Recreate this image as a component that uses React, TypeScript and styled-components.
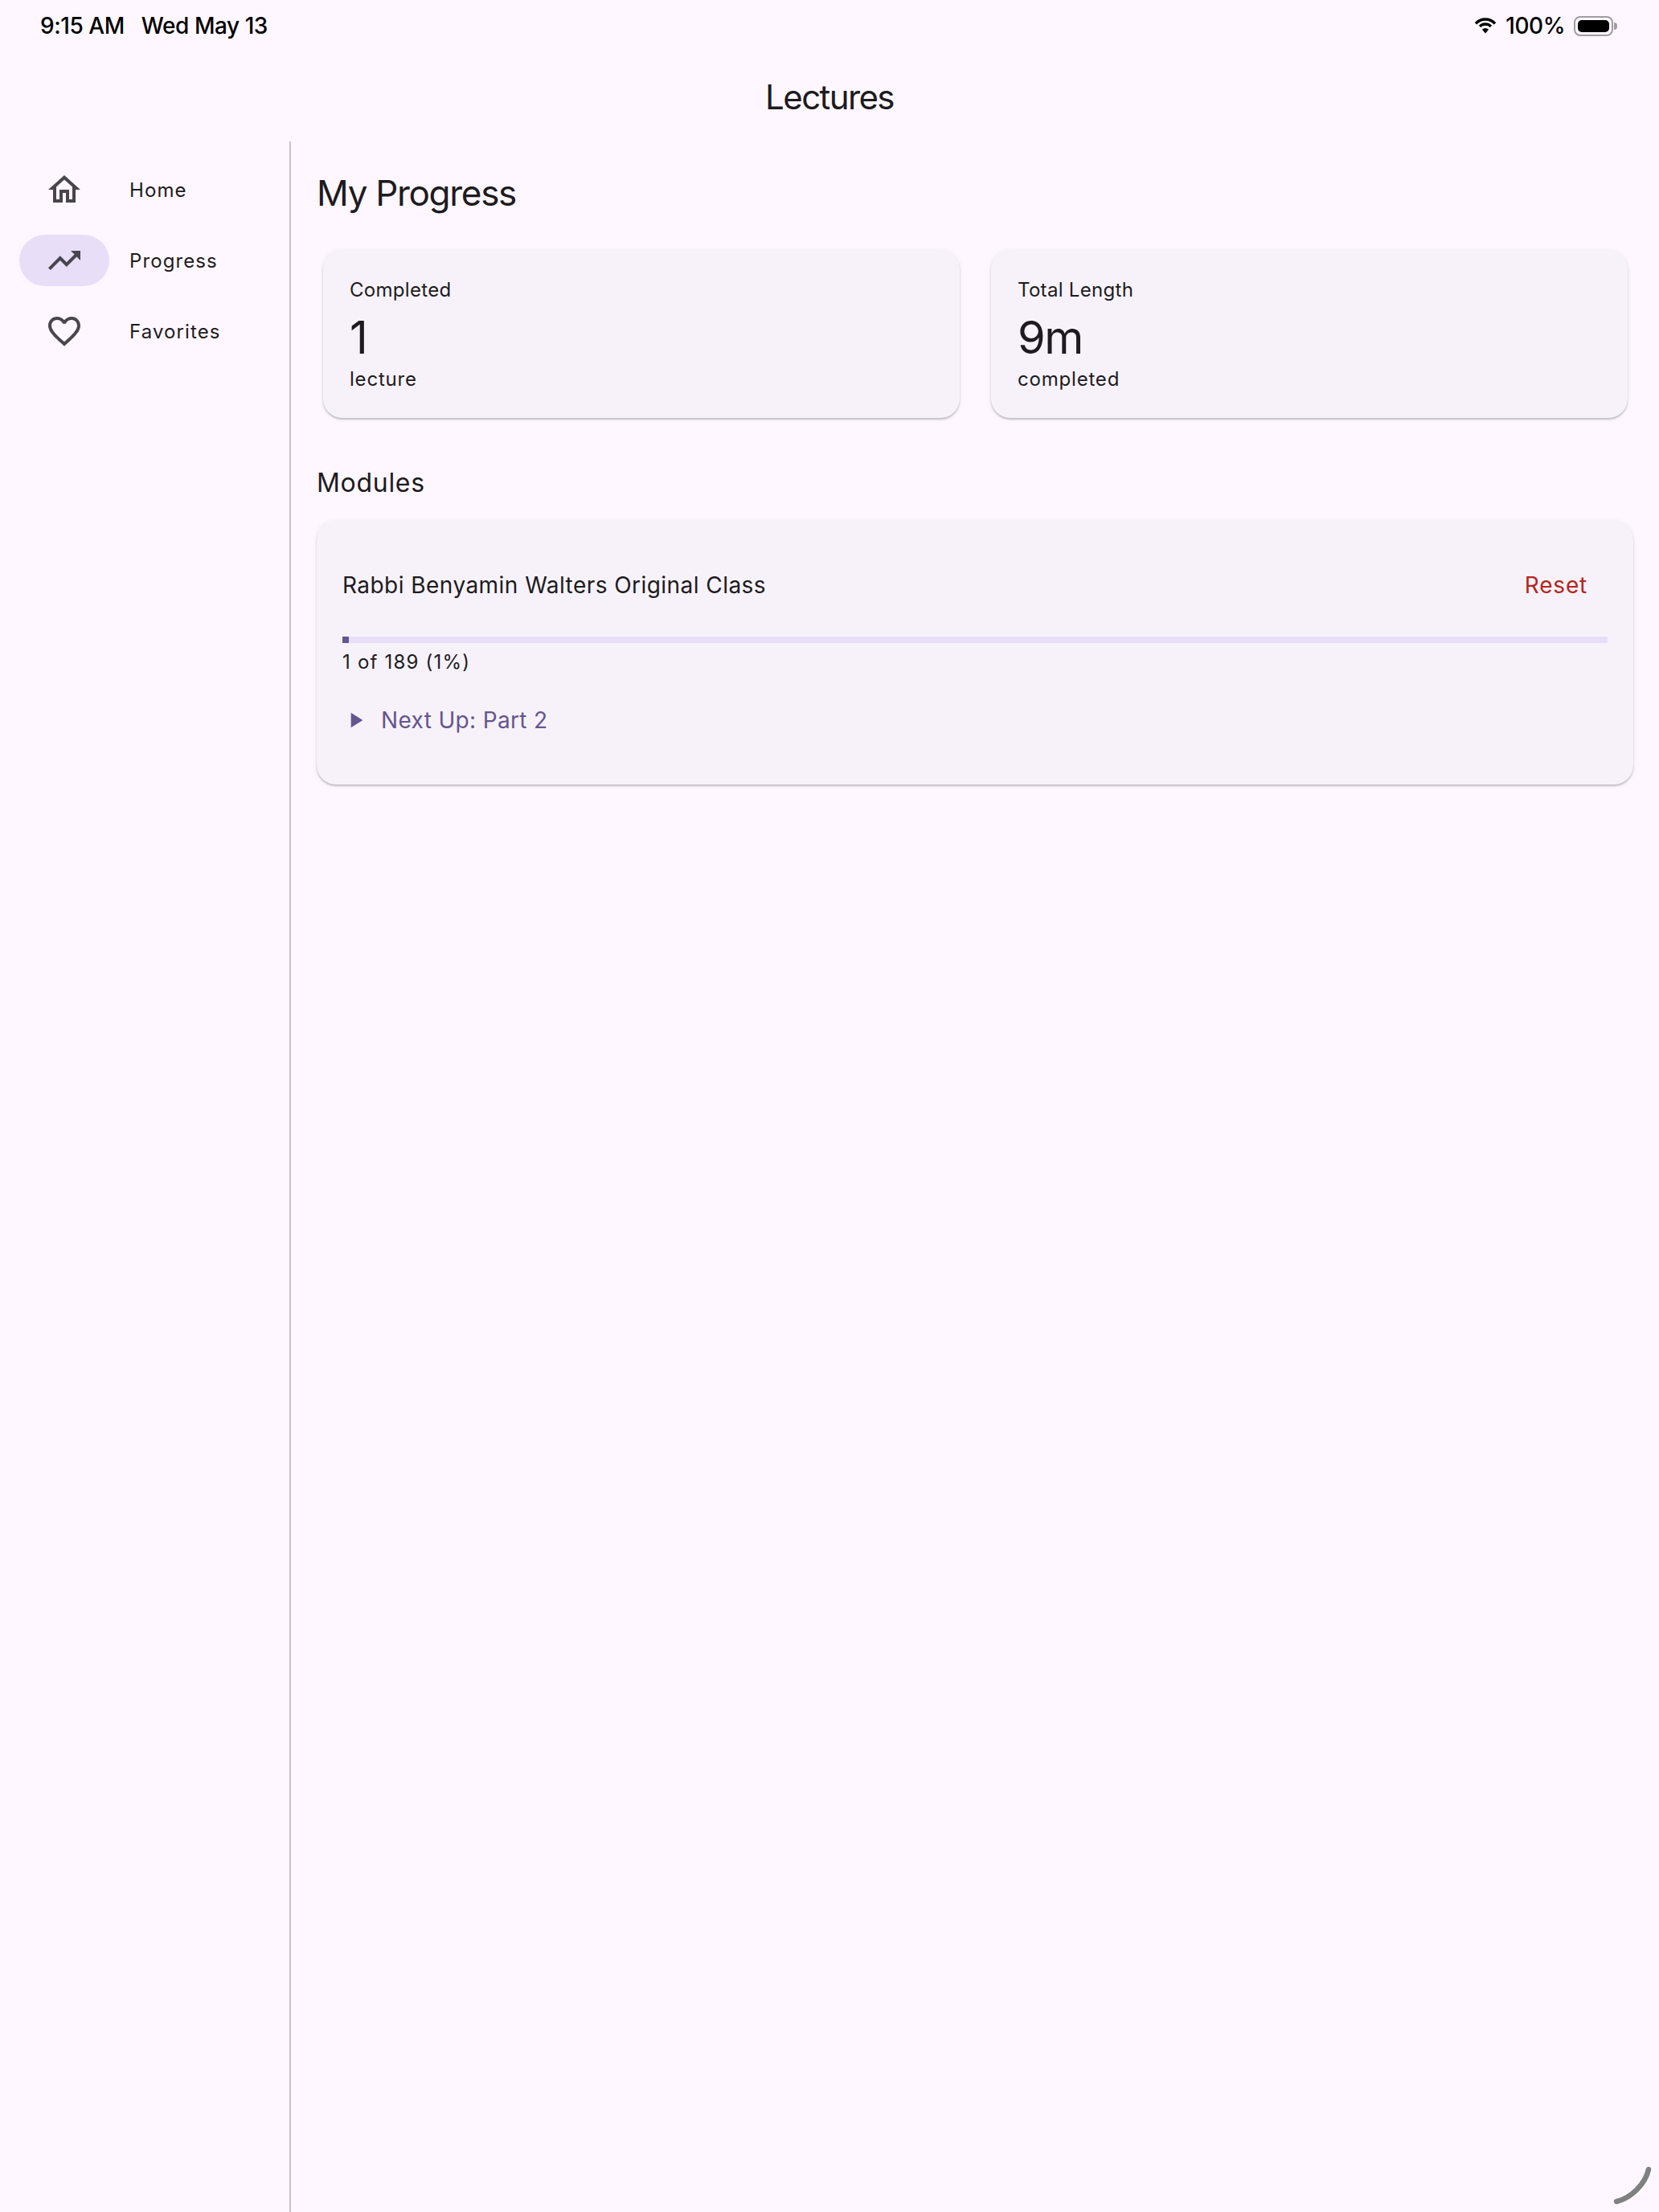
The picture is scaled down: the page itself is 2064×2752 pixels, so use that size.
import styled, { createGlobalStyle } from "styled-components";

const GlobalStyle = createGlobalStyle`
  html, body {
    margin: 0;
    padding: 0;
    background: #fef7ff;
  }
  * {
    box-sizing: border-box;
  }
`;

const Page = styled.div`
  width: 2064px;
  height: 2752px;
  display: flex;
  flex-direction: column;
  background: #fef7ff;
  color: #1d1b20;
  font-family: "Inter", "Liberation Sans", sans-serif;
  overflow: hidden;
`;

const StatusBar = styled.div`
  height: 64px;
  flex-shrink: 0;
  display: flex;
  align-items: center;
  justify-content: space-between;
  padding: 0 52px 0 50px;
  color: #000;
  font-size: 28px;
  font-weight: 500;
`;

const StatusGroup = styled.div<{ $gap: number }>`
  display: flex;
  align-items: center;
  gap: ${({ $gap }) => $gap}px;
`;

const StatusText = styled.span`
  letter-spacing: -0.45px;
  white-space: nowrap;
`;

const Battery = styled.div`
  position: relative;
  width: 49px;
  height: 25px;
  padding: 3px;
  border: 2px solid #a09ca2;
  border-radius: 8px;
  margin-right: 5px;

  &::before {
    content: "";
    display: block;
    height: 100%;
    background: #000;
    border-radius: 5px;
  }

  &::after {
    content: "";
    position: absolute;
    right: -7px;
    top: 6px;
    width: 4px;
    height: 9px;
    background: #a09ca2;
    border-radius: 0 4px 4px 0;
  }
`;

const TitleBar = styled.header`
  height: 112px;
  flex-shrink: 0;
  display: flex;
  align-items: center;
  justify-content: center;
  padding-top: 1px;
  font-size: 42px;
  font-weight: 400;
  letter-spacing: -1.6px;
`;

const Body = styled.div`
  flex: 1;
  display: flex;
  min-height: 0;
`;

const Sidebar = styled.nav`
  width: 362px;
  flex-shrink: 0;
  display: flex;
  flex-direction: column;
  padding-top: 16px;
  border-right: 2px solid #cac4d0;
`;

const NavRow = styled.div`
  height: 88px;
  display: flex;
  align-items: center;
  gap: 25px;
  padding-left: 24px;
`;

const NavIcon = styled.div<{ $active?: boolean }>`
  width: 112px;
  height: 64px;
  display: flex;
  align-items: center;
  justify-content: center;
  border-radius: 32px;
  background: ${({ $active }) => ($active ? "#e8def8" : "transparent")};
  color: #49454f;
`;

const NavLabel = styled.span`
  font-size: 24px;
  font-weight: 400;
  letter-spacing: 1.1px;
  color: #1d1b20;
`;

const Main = styled.main`
  flex: 1;
  min-width: 0;
  padding: 32px 32px 0;
`;

const Heading = styled.h1`
  margin: 0;
  font-size: 44px;
  line-height: 64px;
  font-weight: 400;
  letter-spacing: -1.3px;
`;

const StatGrid = styled.div`
  display: grid;
  grid-template-columns: 1fr 1fr;
  gap: 39px;
  padding: 0 7px 0 8px;
  margin-top: 39px;
`;

const Card = styled.section`
  background: #f7f2fa;
  border-radius: 24px;
  box-shadow: 0 2px 2px rgba(0, 0, 0, 0.2), 0 1px 6px rgba(0, 0, 0, 0.08);
`;

const StatCard = styled(Card)`
  height: 209px;
  padding: 34px 33px 0;
`;

const StatLabel = styled.div`
  font-size: 24px;
  line-height: 32px;
  font-weight: 400;
  letter-spacing: 0.3px;
`;

const StatValue = styled.div`
  margin-top: 7px;
  font-size: 56px;
  line-height: 72px;
  font-weight: 400;
  letter-spacing: -1.4px;
`;

const StatUnit = styled.div`
  font-size: 24px;
  line-height: 32px;
  letter-spacing: 0.8px;
`;

const SectionTitle = styled.h2`
  margin: 57px 0 23px;
  font-size: 32px;
  line-height: 48px;
  font-weight: 400;
  letter-spacing: 0.7px;
`;

const ModuleCard = styled(Card)`
  height: 328px;
  padding: 32px;
`;

const ModuleHeader = styled.div`
  height: 96px;
  display: flex;
  align-items: center;
  justify-content: space-between;
  margin-bottom: 16px;
`;

const ModuleName = styled.span`
  font-size: 28px;
  font-weight: 400;
  letter-spacing: 0.45px;
`;

const ResetButton = styled.button`
  border: none;
  background: none;
  padding: 0 25px 0 0;
  color: #b3261e;
  font-family: inherit;
  font-size: 28px;
  font-weight: 400;
  letter-spacing: 0.8px;
  cursor: pointer;
`;

const ProgressTrack = styled.div`
  height: 8px;
  background: #e8def8;
`;

const ProgressFill = styled.div`
  height: 100%;
  background: #65558f;
`;

const ProgressText = styled.div`
  margin-top: 8px;
  font-size: 24px;
  line-height: 32px;
  letter-spacing: 1.2px;
`;

const NextUp = styled.div`
  display: flex;
  align-items: center;
  gap: 16px;
  margin-top: 36px;
  color: #65558f;
  font-size: 28px;
  line-height: 40px;
  font-weight: 400;
  letter-spacing: 0.35px;
`;

const CornerMark = styled.svg`
  position: absolute;
  right: 0;
  bottom: 0;
`;

const Frame = styled.div`
  position: relative;
`;

const MaterialIcon = ({ d, size = 48 }: { d: string; size?: number }) => (
  <svg width={size} height={size} viewBox="0 0 24 24" fill="currentColor">
    <path d={d} />
  </svg>
);

const HOME =
  "M12 5.69l5 4.5V18h-2v-6H9v6H7v-7.81l5-4.5M12 3L2 12h3v8h6v-6h2v6h6v-8h3L12 3z";
const TRENDING =
  "M16 6l2.29 2.29-4.88 4.88-4-4L2 16.59 3.41 18l6-6 4 4 6.3-6.29L22 12V6z";
const HEART =
  "M16.5 3c-1.74 0-3.41.81-4.5 2.09C10.91 3.81 9.24 3 7.5 3 4.42 3 2 5.42 2 8.5c0 3.78 3.4 6.86 8.55 11.54L12 21.35l1.45-1.32C18.6 15.36 22 12.28 22 8.5 22 5.42 19.58 3 16.5 3zm-4.4 15.55l-.1.1-.1-.1C7.14 14.24 4 11.39 4 8.5 4 6.5 5.5 5 7.5 5c1.54 0 3.04.99 3.57 2.36h1.87C13.46 5.99 14.96 5 16.5 5c2 0 3.5 1.5 3.5 3.5 0 2.89-3.14 5.74-7.9 10.05z";
const PLAY = "M8 5v14l11-7z";

const navItems = [
  { label: "Home", icon: HOME },
  { label: "Progress", icon: TRENDING, active: true },
  { label: "Favorites", icon: HEART },
];

const stats = [
  { label: "Completed", value: "1", unit: "lecture" },
  { label: "Total Length", value: "9m", unit: "completed" },
];

export default function App() {
  return (
    <Frame>
      <GlobalStyle />
      <Page>
        <StatusBar>
          <StatusGroup $gap={21}>
            <StatusText>9:15 AM</StatusText>
            <StatusText>Wed May 13</StatusText>
          </StatusGroup>
          <StatusGroup $gap={11}>
            <svg width="28" height="20" viewBox="0 0 28 20" fill="none" stroke="#000">
              <path d="M2 7.400A16 16 0 0 1 26 7.400" strokeWidth="3.400" />
              <path d="M7 10.900A10 10 0 0 1 21 10.900" strokeWidth="3.400" />
              <path d="M14 19.500L9.900 14.700A6 6 0 0 1 18.100 14.700Z" fill="#000" stroke="none" />
            </svg>
            <StatusText>100%</StatusText>
            <Battery />
          </StatusGroup>
        </StatusBar>
        <TitleBar>Lectures</TitleBar>
        <Body>
          <Sidebar>
            {navItems.map((item) => (
              <NavRow key={item.label}>
                <NavIcon $active={item.active}>
                  <MaterialIcon d={item.icon} />
                </NavIcon>
                <NavLabel>{item.label}</NavLabel>
              </NavRow>
            ))}
          </Sidebar>
          <Main>
            <Heading>My Progress</Heading>
            <StatGrid>
              {stats.map((stat) => (
                <StatCard key={stat.label}>
                  <StatLabel>{stat.label}</StatLabel>
                  <StatValue>{stat.value}</StatValue>
                  <StatUnit>{stat.unit}</StatUnit>
                </StatCard>
              ))}
            </StatGrid>
            <SectionTitle>Modules</SectionTitle>
            <ModuleCard>
              <ModuleHeader>
                <ModuleName>Rabbi Benyamin Walters Original Class</ModuleName>
                <ResetButton>Reset</ResetButton>
              </ModuleHeader>
              <ProgressTrack>
                <ProgressFill style={{ width: `${(1 / 189) * 100}%` }} />
              </ProgressTrack>
              <ProgressText>1 of 189 (1%)</ProgressText>
              <NextUp>
                <MaterialIcon d={PLAY} size={32} />
                Next Up: Part 2
              </NextUp>
            </ModuleCard>
          </Main>
        </Body>
      </Page>
      <CornerMark width="70" height="70" viewBox="0 0 70 70" fill="none">
        <path d="M57 17C53 35 36 52 17 57" stroke="#808080" strokeWidth="6.500" strokeLinecap="round" />
      </CornerMark>
    </Frame>
  );
}
